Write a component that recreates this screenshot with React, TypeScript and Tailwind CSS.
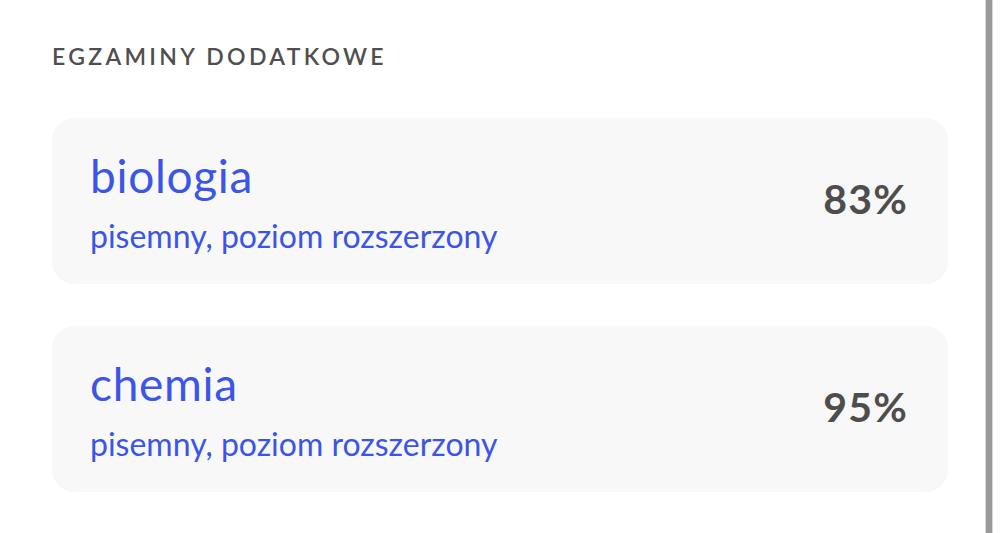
const exams = [
    { name: "biologia", detail: "pisemny, poziom rozszerzony", score: "83%" },
    { name: "chemia", detail: "pisemny, poziom rozszerzony", score: "95%" },
];

function ExamCard({ name, detail, score }: { name: string; detail: string; score: string }) {
    return (
        <div className="flex items-center justify-between h-[166px] rounded-[22px] bg-[#f8f8f8] pl-[38px] pr-[40px]">
            <div className="flex flex-col">
                <span className="text-[46px] leading-[56px] tracking-[0.7px] text-[#3b55e6]">{name}</span>
                <span className="mt-[13px] text-[32px] leading-[38px] text-[#3b55e6]">{detail}</span>
            </div>
            <span className="-mt-[4px] text-[41px] leading-[48px] font-bold tracking-[1.2px] text-[#4d4d4d]">
                {score}
            </span>
        </div>
    );
}

export default function App() {
    return (
        <div className="flex h-[533px] w-[1000px] bg-white font-['Lato',sans-serif]">
            <div className="flex-1 pl-[52px] pr-[37px] pt-[42px]">
                <h2 className="text-[23px] leading-[28px] font-semibold tracking-[3.3px] text-[#4f4f4f]">
                    EGZAMINY DODATKOWE
                </h2>
                <div className="mt-[48px] flex flex-col gap-[42px]">
                    {exams.map((e) => (
                        <ExamCard key={e.name} {...e} />
                    ))}
                </div>
            </div>
            <div className="w-[8px] border-x border-[#d8d8d8] bg-[#9a9a9a]" />
            <div className="w-[7px]" />
        </div>
    );
}
